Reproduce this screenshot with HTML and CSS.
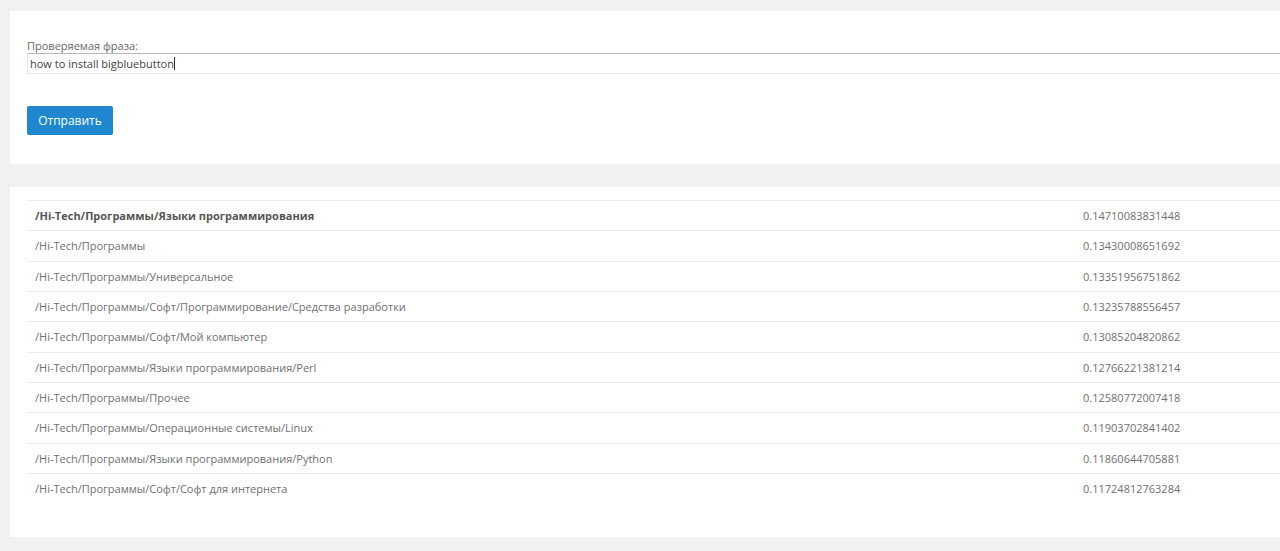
FILE: index.html
```
<!DOCTYPE html>
<html lang="ru">

<head>
    <meta charset="UTF-8">
    <meta name="viewport" content="width=device-width, initial-scale=1.0">
    <title>Проверка фразы</title>
    <link rel="stylesheet" href="styles.css">
</head>

<body>
    <div class="page">
        <div class="card form-card">
            <form class="check-form" onsubmit="return false">
                <label class="field-label" for="phrase">Проверяемая фраза:</label>
                <div class="field-input">
                    <span class="field-text">how to install bigbluebutton</span><span class="caret"></span>
                </div>
                <button type="submit" class="btn-send">Отправить</button>
            </form>
        </div>

        <div class="card result-card">
            <table class="result-table">
                <tr class="top">
                    <td class="path">/Hi-Tech/Программы/Языки программирования</td>
                    <td class="score">0.14710083831448</td>
                </tr>
                <tr>
                    <td class="path">/Hi-Tech/Программы</td>
                    <td class="score">0.13430008651692</td>
                </tr>
                <tr>
                    <td class="path">/Hi-Tech/Программы/Универсальное</td>
                    <td class="score">0.13351956751862</td>
                </tr>
                <tr>
                    <td class="path">/Hi-Tech/Программы/Софт/Программирование/Средства разработки</td>
                    <td class="score">0.13235788556457</td>
                </tr>
                <tr>
                    <td class="path">/Hi-Tech/Программы/Софт/Мой компьютер</td>
                    <td class="score">0.13085204820862</td>
                </tr>
                <tr>
                    <td class="path">/Hi-Tech/Программы/Языки программирования/Perl</td>
                    <td class="score">0.12766221381214</td>
                </tr>
                <tr>
                    <td class="path">/Hi-Tech/Программы/Прочее</td>
                    <td class="score">0.12580772007418</td>
                </tr>
                <tr>
                    <td class="path">/Hi-Tech/Программы/Операционные системы/Linux</td>
                    <td class="score">0.11903702841402</td>
                </tr>
                <tr>
                    <td class="path">/Hi-Tech/Программы/Языки программирования/Python</td>
                    <td class="score">0.11860644705881</td>
                </tr>
                <tr>
                    <td class="path">/Hi-Tech/Программы/Софт/Софт для интернета</td>
                    <td class="score">0.11724812763284</td>
                </tr>
            </table>
        </div>
    </div>
</body>

</html>
```

FILE: styles.css
```
html,
body {
    margin: 0;
    padding: 0;
    overflow: hidden;
}

body {
    background: #f1f1f1;
    font-family: "Open Sans", "Liberation Sans", sans-serif;
    font-size: 11px;
    color: #707070;
}

.page {
    display: flex;
    flex-direction: column;
    gap: 23px;
    padding: 11px 0 0 10px;
    width: 1300px;
}

.card {
    background: #fff;
}

.form-card {
    height: 153px;
    box-sizing: border-box;
    padding: 27px 0 0 17px;
}

.check-form {
    display: flex;
    flex-direction: column;
    align-items: flex-start;
}

.field-label {
    line-height: 15px;
    color: #6a6a6a;
}

.field-input {
    box-sizing: border-box;
    width: 100%;
    height: 21px;
    border-top: 1px solid #b9b9b9;
    border-left: 1px solid #e8e8e8;
    border-bottom: 1px solid #ececec;
    padding: 0 2px;
    line-height: 19px;
    color: #444;
    display: flex;
    align-items: center;
}

.caret {
    display: inline-block;
    width: 1px;
    height: 13px;
    background: #333;
}

.btn-send {
    margin-top: 32px;
    width: 86px;
    height: 29px;
    border: 0;
    border-radius: 2px;
    background: #1e87d0;
    color: #fff;
    font-family: "Open Sans", "Liberation Sans", sans-serif;
    font-size: 12px;
    padding: 0;
    cursor: pointer;
}

.result-card {
    height: 350px;
    box-sizing: border-box;
    padding: 13px 0 0 17px;
}

.result-table {
    width: 100%;
    border-collapse: collapse;
}

.result-table td {
    padding: 7px 8px;
    line-height: 15.33px;
    border-top: 1px solid #ececec;
    white-space: nowrap;
}

.result-table .path {
    width: 1032px;
}

.result-table .top .path {
    font-weight: bold;
    color: #555;
}
```
